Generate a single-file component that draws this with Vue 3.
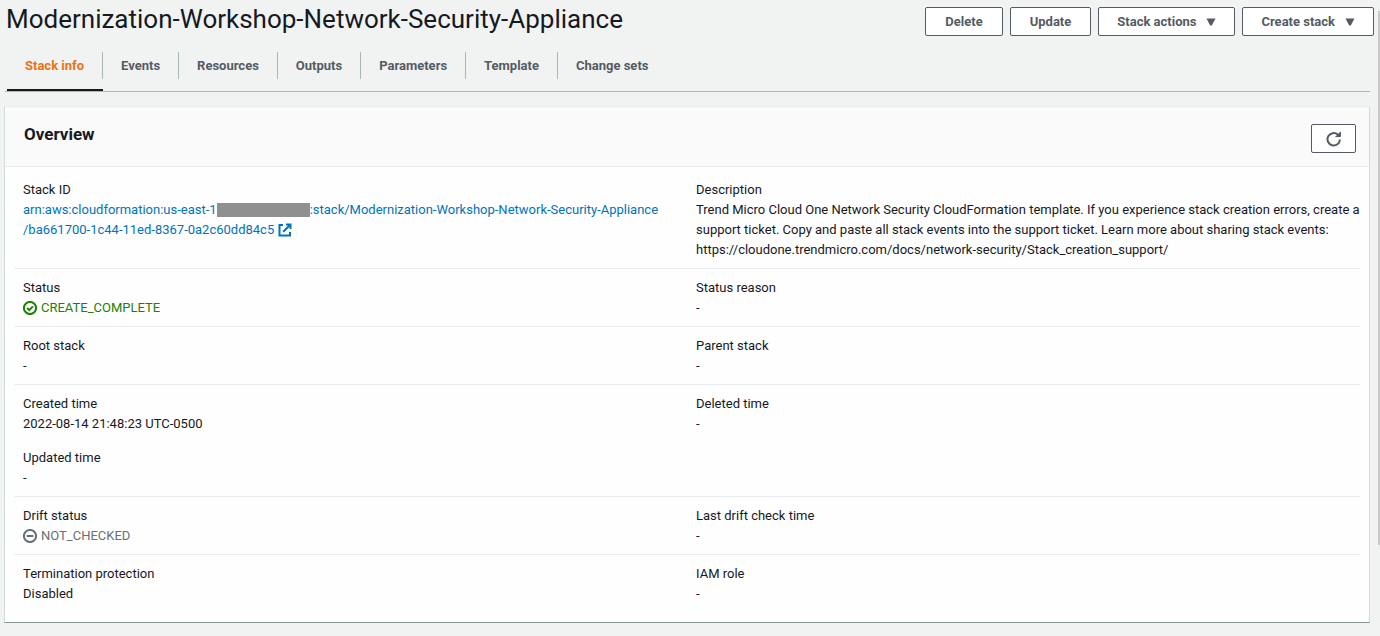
<script setup>
import { ref } from 'vue'

const tabs = ['Stack info', 'Events', 'Resources', 'Outputs', 'Parameters', 'Template', 'Change sets']
const active = ref('Stack info')

const rows = [
  [[{ label: 'Stack ID', kind: 'arn' }], [{
    label: 'Description',
    value: 'Trend Micro Cloud One Network Security CloudFormation template. If you experience stack creation errors, create a support ticket. Copy and paste all stack events into the support ticket. Learn more about sharing stack events: https://cloudone.trendmicro.com/docs/network-security/Stack_creation_support/'
  }]],
  [[{ label: 'Status', value: 'CREATE_COMPLETE', kind: 'ok' }], [{ label: 'Status reason', value: '-' }]],
  [[{ label: 'Root stack', value: '-' }], [{ label: 'Parent stack', value: '-' }]],
  [[{ label: 'Created time', value: '2022-08-14 21:48:23 UTC-0500' }, { label: 'Updated time', value: '-' }], [{ label: 'Deleted time', value: '-' }]],
  [[{ label: 'Drift status', value: 'NOT_CHECKED', kind: 'off' }], [{ label: 'Last drift check time', value: '-' }]],
  [[{ label: 'Termination protection', value: 'Disabled' }], [{ label: 'IAM role', value: '-' }]]
]
</script>

<template>
  <main class="page">
    <header class="top">
      <h1>Modernization-Workshop-Network-Security-Appliance</h1>
      <div class="actions">
        <button type="button" class="btn plain">Delete</button>
        <button type="button" class="btn plain">Update</button>
        <button type="button" class="btn">Stack actions
          <svg class="caret" viewBox="0 0 10 8" aria-hidden="true"><path d="M0.5 0.5h9L5.8 7.6H4.2z" /></svg>
        </button>
        <button type="button" class="btn">Create stack
          <svg class="caret" viewBox="0 0 10 8" aria-hidden="true"><path d="M0.5 0.5h9L5.8 7.6H4.2z" /></svg>
        </button>
      </div>
    </header>

    <nav class="tabs" role="tablist">
      <button
        v-for="t in tabs" :key="t" type="button" role="tab" class="tab"
        :class="{ active: t === active }" :aria-selected="t === active" @click="active = t"
      ><span>{{ t }}</span></button>
    </nav>

    <section class="card">
      <div class="card-head">
        <h2>Overview</h2>
        <button type="button" class="btn refresh" aria-label="Refresh">
          <svg viewBox="0 0 16 16" aria-hidden="true">
            <path d="M13.9 8.4A6.2 6.2 0 1 1 11.8 3.6L13.4 5.2" />
            <path class="head" d="M14.4 0.8V5.6H9.4" />
          </svg>
        </button>
      </div>
      <div class="card-body">
        <div v-for="(row, i) in rows" :key="i" class="row">
          <dl v-for="(col, j) in row" :key="j" class="col">
            <div v-for="f in col" :key="f.label" class="field">
              <dt>{{ f.label }}</dt>
              <dd v-if="f.kind === 'arn'">
                <a href="#" class="arn">
                  <span class="line"><span>arn:aws:cloudformation:us-east-1</span><span class="mask"></span><span>:stack/Modernization-Workshop-Network-Security-Appliance</span></span>
                  <span class="line"><span>/ba661700-1c44-11ed-8367-0a2c60dd84c5</span>
                    <svg class="ext" viewBox="0 0 14 14" aria-hidden="true">
                      <path d="M5 2H1.5v10.5H12V9M8 1.5h4.5V6M12.2 1.8L5.2 8.8" />
                    </svg></span>
                </a>
              </dd>
              <dd v-else-if="f.kind === 'ok'" class="status ok">
                <svg viewBox="0 0 14 14" aria-hidden="true"><circle cx="7" cy="7" r="6.1" /><path d="M4.2 7l2.1 2.1 3.6-3.7" /></svg>{{ f.value }}
              </dd>
              <dd v-else-if="f.kind === 'off'" class="status off">
                <svg viewBox="0 0 14 14" aria-hidden="true"><circle cx="7" cy="7" r="6.1" /><path d="M3.6 7h6.8" /></svg>{{ f.value }}
              </dd>
              <dd v-else>{{ f.value }}</dd>
            </div>
          </dl>
        </div>
      </div>
    </section>
    <div class="scroll" aria-hidden="true"></div>
  </main>
</template>

<style>
body { background: #f1f3f3; }
</style>

<style scoped>
.page {
  position: relative;
  box-sizing: border-box;
  min-height: 100vh;
  padding: 0 10px 13px 4px;
  font-family: Roboto, "Noto Sans", sans-serif;
  font-size: 13px;
  line-height: 20px;
  color: #16191f;
}
.top {
  display: flex;
  justify-content: space-between;
  align-items: flex-start;
  margin-right: -4px;
  height: 44px;
}
h1 {
  margin: 2px 0 0 2px;
  font-size: 26px;
  line-height: 34px;
  font-weight: 400;
  white-space: nowrap;
}
.actions { display: flex; gap: 7px; padding-top: 7px; }
.btn {
  display: flex;
  align-items: center;
  justify-content: center;
  gap: 10px;
  box-sizing: border-box;
  height: 29px;
  padding: 0 18px;
  border: 1px solid #545b64;
  border-radius: 2px;
  background: #fff;
  color: #545b64;
  font: 700 13px/20px Roboto, "Noto Sans", sans-serif;
  white-space: nowrap;
}
.btn.plain { padding: 0 19px; }
.caret { width: 10px; height: 8px; fill: #545b64; }
.tabs {
  display: flex;
  margin-left: 1px;
  padding-left: 2px;
  border-bottom: 1px solid #aab7b8;
}
.tab {
  padding: 8px 0 10px;
  border: 0;
  border-bottom: 2px solid transparent;
  background: none;
  color: #545b64;
  font: 700 13px/27px Roboto, "Noto Sans", sans-serif;
}
.tab span { display: block; padding: 0 18px; border-right: 1px solid #aab7b8; }
.tab:last-child span { border-right: 0; }
.tab.active { color: #ec7211; border-bottom-color: #16191f; }
.card {
  margin-top: 14px;
  border: 1px solid #d5dbdb;
  border-top-color: #eaeded;
  border-bottom-color: #879596;
  background: #fefefe;
}
.card-head {
  display: flex;
  justify-content: space-between;
  align-items: flex-start;
  padding: 17px 13px 13px 19px;
  border-bottom: 1px solid #eaeded;
  background: #fafafa;
}
h2 { margin: 0; font-size: 17px; line-height: 20px; font-weight: 700; }
.btn.refresh { width: 45px; padding: 0; }
.refresh svg { width: 16px; height: 16px; fill: none; stroke: #545b64; stroke-width: 2; }
.refresh .head { fill: #545b64; stroke-width: 1; }
.card-body { padding: 4px 9px 10px; }
.row {
  display: grid;
  grid-template-columns: minmax(0, 1fr) minmax(0, 1fr);
  padding: 9px 0 8px;
  border-bottom: 1px solid #eaeded;
}
.row:last-child { border-bottom: 0; }
.col { display: flex; flex-direction: column; gap: 14px; margin: 0; padding: 0 0 0 9px; }
dt, dd { margin: 0; }
a { color: #0073bb; text-decoration: none; }
.arn { display: block; }
.line { display: flex; align-items: center; white-space: nowrap; }
.mask { width: 93px; height: 14px; background: #909090; }
.ext { width: 14px; height: 14px; margin-left: 4px; fill: none; stroke: currentColor; stroke-width: 2; }
.status { display: flex; align-items: center; gap: 4px; }
.status svg { width: 14px; height: 14px; fill: none; stroke: currentColor; stroke-width: 2; }
.ok { color: #1d8102; }
.off { color: #687078; }
.scroll {
  position: absolute;
  top: 11px;
  right: 0;
  width: 2px;
  height: 84%;
  background: #c8c8c8;
}
</style>
